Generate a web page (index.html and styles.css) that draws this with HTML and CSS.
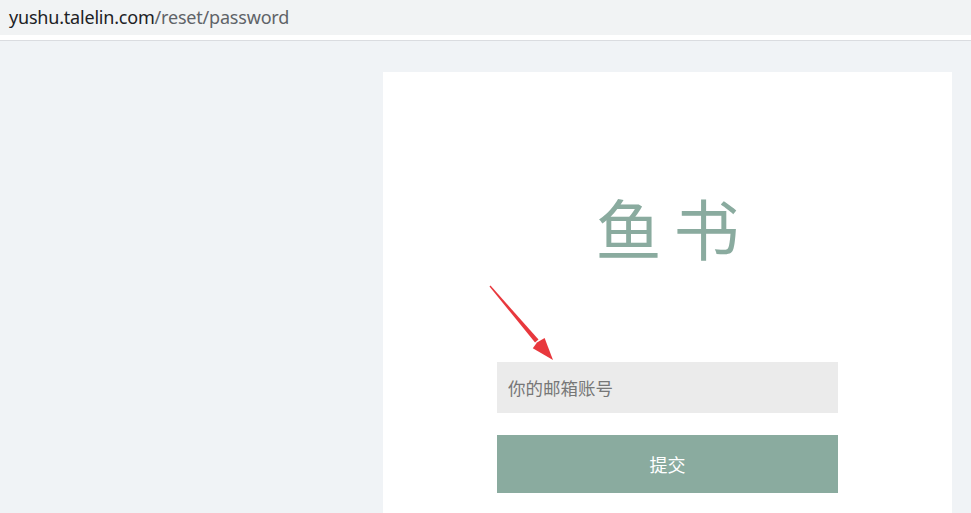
FILE: index.html
```html
<!DOCTYPE html>
<html lang="zh">
<head>
<meta charset="utf-8">
<title>重置密码</title>
<link rel="stylesheet" href="styles.css">
</head>
<body>
<div class="addr">
  <div class="addr-bar"><span class="host">yushu.talelin.com</span><span class="path">/reset/password</span></div>
  <div class="addr-gap"></div>
</div>
<main class="page">
  <section class="card">
    <h1 class="logo">鱼书</h1>
    <form class="form">
      <input class="field" type="text" placeholder="你的邮箱账号">
      <button class="submit" type="button">提交</button>
    </form>
    <svg class="arrow" width="80" height="90" viewBox="0 0 80 90">
      <polygon points="1.5,2.4 2.5,1.6 50.5,55.5 47,58.6" fill="#e8383d"/>
      <polygon points="65,76 44.8,64.2 49,58.5 56.6,54 " fill="#e8383d"/>
    </svg>
  </section>
</main>
</body>
</html>
```
FILE: styles.css
```css
html, body {
  margin: 0;
  padding: 0;
  background: #f0f3f6;
  font-family: "Noto Sans", "Noto Sans CJK SC", sans-serif;
  height: 100%;
  overflow: hidden;
}
body {
  display: flex;
  flex-direction: column;
}
.addr {
  background: #fff;
}
.addr-bar {
  height: 35px;
  background: #f1f3f4;
  display: flex;
  align-items: center;
  padding-left: 9px;
  font-size: 18px;
  letter-spacing: -0.2px;
  box-sizing: border-box;
  padding-bottom: 2px;
}
.host { color: #202124; }
.path { color: #5f6368; }
.addr-gap {
  height: 5px;
  background: #fff;
  border-bottom: 1px solid #dadce0;
}
.page {
  flex: 1;
  display: flex;
  padding: 31px 19px 0 383px;
}
.card {
  position: relative;
  flex: 1;
  background: #fff;
  display: flex;
  flex-direction: column;
  align-items: center;
}
.logo {
  margin: 109px 0 0 0;
  font-family: "Noto Sans CJK SC", sans-serif;
  font-weight: 400;
  font-size: 66px;
  line-height: 90px;
  letter-spacing: 12px;
  padding-left: 12px;
  color: #8aab9f;
}
.form {
  margin-top: 91px;
  display: flex;
  flex-direction: column;
  gap: 22px;
}
.field {
  width: 341px;
  height: 51px;
  box-sizing: border-box;
  border: none;
  outline: none;
  background: #ebebeb;
  padding: 0 11px;
  font-family: "Noto Sans CJK SC", sans-serif;
  font-size: 17.5px;
}
.field::placeholder {
  color: #777;
}
.submit {
  width: 341px;
  height: 58px;
  border: none;
  background: #8aab9f;
  color: #fff;
  font-family: "Noto Sans CJK SC", sans-serif;
  font-size: 18px;
}
.arrow {
  position: absolute;
  left: 105px;
  top: 212px;
}
```
